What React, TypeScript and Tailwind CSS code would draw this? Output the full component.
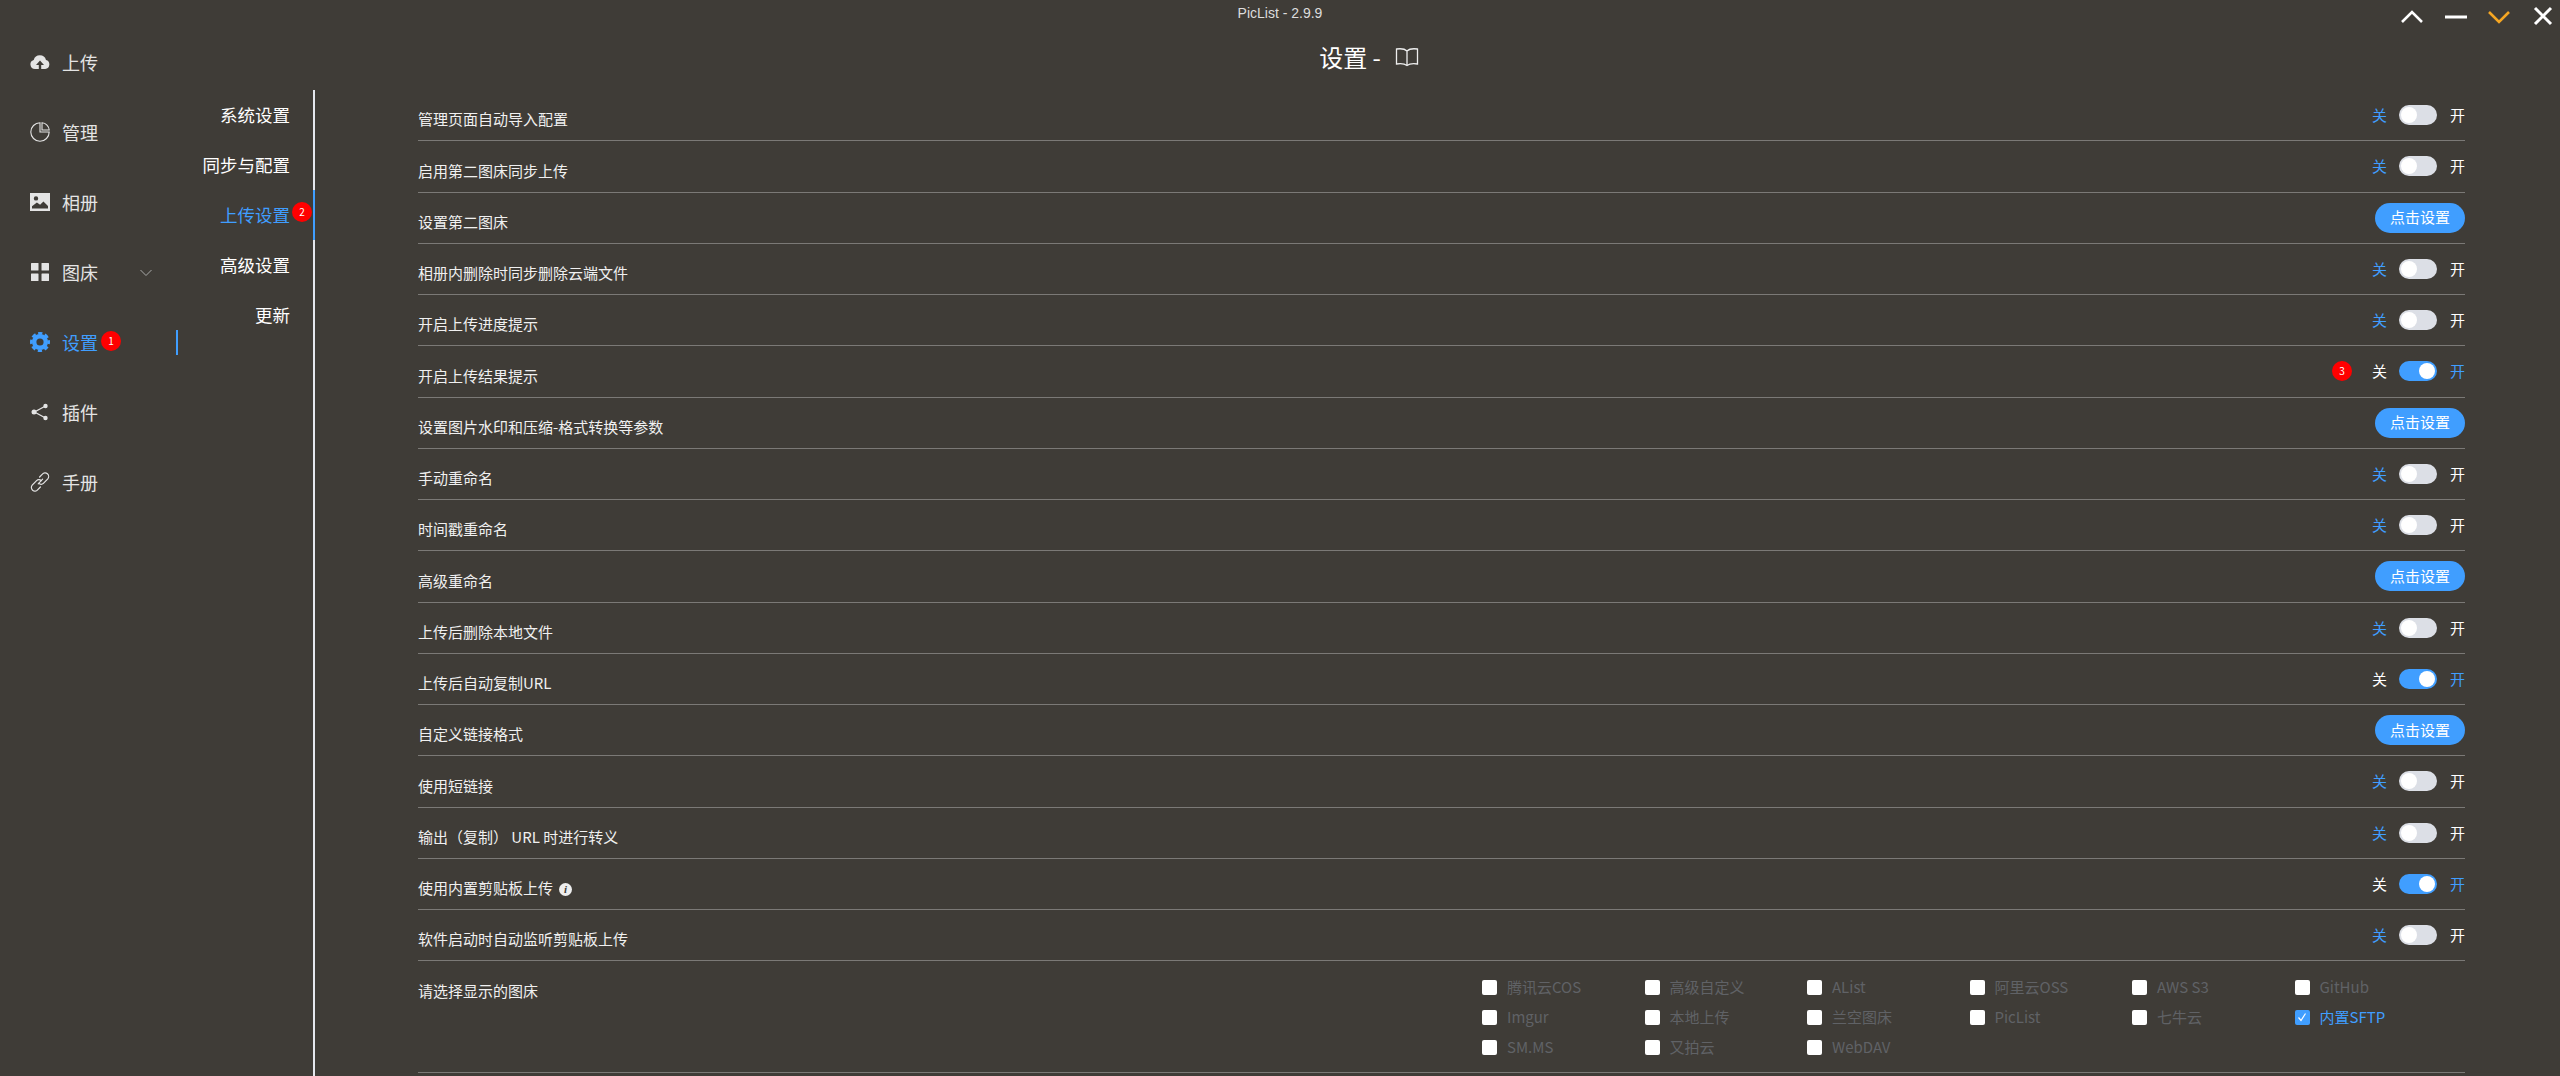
const cjk = `font-['Noto_Sans_CJK_SC','Liberation_Sans',sans-serif]`

type Row = {
  label: string
  kind: 'off' | 'on' | 'button'
  info?: boolean
  badge?: string
}

const rows: Row[] = [
  { label: '管理页面自动导入配置', kind: 'off' },
  { label: '启用第二图床同步上传', kind: 'off' },
  { label: '设置第二图床', kind: 'button' },
  { label: '相册内删除时同步删除云端文件', kind: 'off' },
  { label: '开启上传进度提示', kind: 'off' },
  { label: '开启上传结果提示', kind: 'on', badge: '3' },
  { label: '设置图片水印和压缩-格式转换等参数', kind: 'button' },
  { label: '手动重命名', kind: 'off' },
  { label: '时间戳重命名', kind: 'off' },
  { label: '高级重命名', kind: 'button' },
  { label: '上传后删除本地文件', kind: 'off' },
  { label: '上传后自动复制URL', kind: 'on' },
  { label: '自定义链接格式', kind: 'button' },
  { label: '使用短链接', kind: 'off' },
  { label: '输出（复制） URL 时进行转义', kind: 'off' },
  { label: '使用内置剪贴板上传', kind: 'on', info: true },
  { label: '软件启动时自动监听剪贴板上传', kind: 'off' }
]

const hosts = [
  '腾讯云COS', '高级自定义', 'AList', '阿里云OSS', 'AWS S3', 'GitHub',
  'Imgur', '本地上传', '兰空图床', 'PicList', '七牛云', '内置SFTP',
  'SM.MS', '又拍云', 'WebDAV'
]

const subTabs = ['系统设置', '同步与配置', '上传设置', '高级设置', '更新']

function UploadIcon() {
  return (
    <svg viewBox="0 0 20 20" className="h-5 w-5" fill="currentColor">
      <path fillRule="evenodd" d="M6 17H5a4.6 4.6 0 0 1-1.3-9A6.4 6.4 0 0 1 16 8a4.6 4.6 0 0 1-.8 9H11.200v-4h2.800L10 8.500 6 13h2.800v4H6z" />
    </svg>
  )
}

function PieIcon() {
  return (
    <svg viewBox="0 0 20 20" className="h-5 w-5" fill="none" stroke="currentColor" strokeWidth="1.100">
      <path d="M10 .8a9.200 9.200 0 1 0 9.200 9.200H10z" />
      <path d="M12 .8A7.600 7.600 0 0 1 19.200 8H12z" />
    </svg>
  )
}

function PictureIcon() {
  return (
    <svg viewBox="0 0 20 20" className="h-5 w-5" fill="currentColor">
      <path fillRule="evenodd" d="M0 1h20v18H0zM2 16.500h16v-2.600l-4.600-4.400-3.300 3.200-3.200-2.100L2 14.200zM6 4.200a2.200 2.200 0 1 0 0 4.400 2.200 2.200 0 0 0 0-4.400z" />
    </svg>
  )
}

function GridIcon() {
  return (
    <svg viewBox="0 0 20 20" className="h-5 w-5" fill="currentColor">
      <rect x="1" y="1" width="7.500" height="7.500" rx="0.500" />
      <rect x="11.500" y="1" width="7.500" height="7.500" rx="0.500" />
      <rect x="1" y="11.500" width="7.500" height="7.500" rx="0.500" />
      <rect x="11.500" y="11.500" width="7.500" height="7.500" rx="0.500" />
    </svg>
  )
}

function GearIcon() {
  return (
    <svg viewBox="0 0 20 20" className="h-5 w-5" fill="none" stroke="currentColor">
      <circle cx="10" cy="10" r="5.800" strokeWidth="4.400" />
      <circle cx="10" cy="10" r="8.700" strokeWidth="2.600" strokeDasharray="4.200 2.630" strokeDashoffset="2.100" />
    </svg>
  )
}

function ShareIcon() {
  return (
    <svg viewBox="0 0 20 20" className="h-5 w-5" fill="currentColor" stroke="currentColor">
      <path d="M15.500 4 4.500 10l11 6" fill="none" strokeWidth="1.300" />
      <circle cx="15.500" cy="4" r="2.200" stroke="none" />
      <circle cx="4" cy="10" r="2.500" stroke="none" />
      <circle cx="15.500" cy="16" r="2.200" stroke="none" />
    </svg>
  )
}

function LinkIcon() {
  return (
    <svg viewBox="0 0 20 20" className="h-5 w-5" fill="none" stroke="currentColor" strokeWidth="1.200" strokeLinecap="round">
      <path d="M8.200 11.800 12.600 7.200" />
      <path d="M9.600 5 12.400 2.200a3.200 3.200 0 0 1 5.400 4.600l-4.400 4.600a3.200 3.200 0 0 1-4.600 0" />
      <path d="M10.400 15 7.600 17.800a3.200 3.200 0 0 1-5.400-4.600l4.400-4.600a3.200 3.200 0 0 1 4.600 0" />
    </svg>
  )
}

function Badge({ value }: { value: string }) {
  return (
    <span className="flex h-5 w-5 shrink-0 items-center justify-center rounded-full bg-[#ff0000] text-[10px] leading-none text-white">
      {value}
    </span>
  )
}

function MenuItem({ icon, label, active, chevron, badge }: {
  icon: React.ReactNode
  label: string
  active?: boolean
  chevron?: boolean
  badge?: string
}) {
  return (
    <div className={`relative flex h-[70px] items-center pl-[30px] text-[18px] ${active ? 'text-[#409eff]' : 'text-[#e4e4e4]'}`}>
      <span className="mr-3 shrink-0">{icon}</span>
      <span>{label}</span>
      {badge ? <span className="ml-[3px] -mt-[3px]"><Badge value={badge} /></span> : null}
      {chevron ? (
        <svg viewBox="0 0 12 8" className="absolute left-[140px] top-[32px] h-2 w-3" fill="none" stroke="#a8a8a8" strokeWidth="1">
          <path d="M0.500 1 6 6.500 11.500 1" />
        </svg>
      ) : null}
      {active ? <span className="absolute left-[176px] top-[23px] h-[25px] w-[2px] bg-[#409eff]" /> : null}
    </div>
  )
}

function Switch({ on }: { on: boolean }) {
  return (
    <div className="flex items-center text-[15px] leading-5">
      <span className={on ? 'text-white' : 'text-[#409eff]'}>关</span>
      <span className={`mx-[12.500px] flex h-5 w-[38px] items-center rounded-[10px] px-[2px] ${on ? 'justify-end bg-[#409eff]' : 'bg-[#dcdfe6]'}`}>
        <span className="h-4 w-4 rounded-full bg-white" />
      </span>
      <span className={on ? 'text-[#409eff]' : 'text-white'}>开</span>
    </div>
  )
}

function SettingRow({ row }: { row: Row }) {
  return (
    <div className="flex h-[51.250px] items-center border-b border-[#7b7976]">
      <div className="mt-[9px] flex items-center text-[15px] text-[#f0f0f0]">
        {row.label}
        {row.info ? (
          <span className="ml-[6px] mt-[2px] flex h-[13px] w-[13px] items-center justify-center rounded-full bg-[#eeeeee] font-['Liberation_Serif',serif] text-[11px] font-bold italic leading-none text-[#3f3c37]">
            i
          </span>
        ) : null}
      </div>
      <div className="ml-auto flex items-center">
        {row.badge ? <span className="mr-5"><Badge value={row.badge} /></span> : null}
        {row.kind === 'button' ? (
          <span className="flex h-[30px] w-[90px] items-center justify-center rounded-[15px] bg-[#409eff] text-[15px] text-white">
            点击设置
          </span>
        ) : (
          <Switch on={row.kind === 'on'} />
        )}
      </div>
    </div>
  )
}

function WindowControls() {
  return (
    <div className="absolute left-[2400px] top-[6px] flex items-center text-white">
      <svg viewBox="0 0 24 16" className="h-4 w-6" fill="none" stroke="currentColor" strokeWidth="2.600">
        <path d="M2 14 12 4l10 10" />
      </svg>
      <svg viewBox="0 0 24 16" className="ml-5 h-4 w-6" fill="none" stroke="currentColor" strokeWidth="3">
        <path d="M1 9h22" />
      </svg>
      <svg viewBox="0 0 24 16" className="ml-[19px] h-4 w-6" fill="none" stroke="#f5a623" strokeWidth="2.600">
        <path d="M2 4l10 10L22 4" />
      </svg>
      <svg viewBox="0 0 20 20" className="ml-[22px] h-[20px] w-[20px]" fill="none" stroke="currentColor" strokeWidth="3">
        <path d="M2 2l16 16M18 2 2 18" />
      </svg>
    </div>
  )
}

export default function App() {
  return (
    <div className={`relative flex h-[1076px] w-[2560px] flex-col overflow-hidden bg-[#3f3c37] ${cjk}`}>
      <div className="flex h-[27px] shrink-0 items-center justify-center font-['Liberation_Sans',sans-serif] text-[14px] text-[#dddddd]">
        PicList - 2.9.9
      </div>
      <WindowControls />

      <div className="flex min-h-0 flex-1">
        <nav className="w-[178px] shrink-0">
          <MenuItem icon={<UploadIcon />} label="上传" />
          <MenuItem icon={<PieIcon />} label="管理" />
          <MenuItem icon={<PictureIcon />} label="相册" />
          <MenuItem icon={<GridIcon />} label="图床" chevron />
          <MenuItem icon={<GearIcon />} label="设置" active badge="1" />
          <MenuItem icon={<ShareIcon />} label="插件" />
          <MenuItem icon={<LinkIcon />} label="手册" />
        </nav>

        <div className="flex min-w-0 flex-1 flex-col">
          <div className="flex h-[63px] shrink-0 items-center justify-center pb-[3px] text-[24px] text-white">
            <span>设置 -</span>
            <svg viewBox="0 0 24 20" className="ml-[14px] h-5 w-6" fill="none" stroke="#eeeeee" strokeWidth="1.300">
              <path d="M12 4C10 2 5 1.500 1.500 2v15c3.500-.5 8.500 0 10.500 1.500 2-1.500 7-2 10.500-1.500V2C19 1.500 14 2 12 4zM12 4v14.500" />
            </svg>
          </div>

          <div className="flex min-h-0 flex-1">
            <div className="w-[137px] shrink-0 border-r-2 border-[#e4e7ed]">
              {subTabs.map((tab) => {
                const active = tab === '上传设置'
                return (
                  <div key={tab} className={`relative -mr-[2px] flex h-[50px] items-center justify-end text-[17.500px] ${active ? 'border-r-2 border-[#409eff] pr-[23px] text-[#409eff]' : 'pr-[25px] text-white'}`}>
                    {tab}
                    {active ? (
                      <span className="absolute right-[1px] top-[12px]">
                        <Badge value="2" />
                      </span>
                    ) : null}
                  </div>
                )
              })}
            </div>

            <div className="min-w-0 flex-1 pl-[103px] pr-[95px]">
              {rows.map((row) => <SettingRow key={row.label} row={row} />)}
              <div className="flex h-[112px] border-b border-[#7b7976]">
                <div className="w-[1064px] shrink-0 pt-5 text-[15px] leading-5 text-[#f0f0f0]">请选择显示的图床</div>
                <div className="grid h-fit grid-cols-[repeat(6,162.500px)] pt-[11px]">
                  {hosts.map((host) => {
                    const checked = host === '内置SFTP'
                    return (
                      <div key={host} className={`flex h-[30px] items-center text-[15px] ${checked ? 'text-[#409eff]' : 'text-[#606266]'}`}>
                        <span className={`mr-[10px] flex h-[15px] w-[15px] items-center justify-center rounded-[2px] ${checked ? 'bg-[#409eff]' : 'bg-white'}`}>
                          {checked ? (
                            <svg viewBox="0 0 12 12" className="h-3 w-3" fill="none" stroke="white" strokeWidth="1.200">
                              <path d="M2.500 6.500 5 9.500 9.500 2.500" />
                            </svg>
                          ) : null}
                        </span>
                        {host}
                      </div>
                    )
                  })}
                </div>
              </div>
            </div>
          </div>
        </div>
      </div>
    </div>
  )
}
